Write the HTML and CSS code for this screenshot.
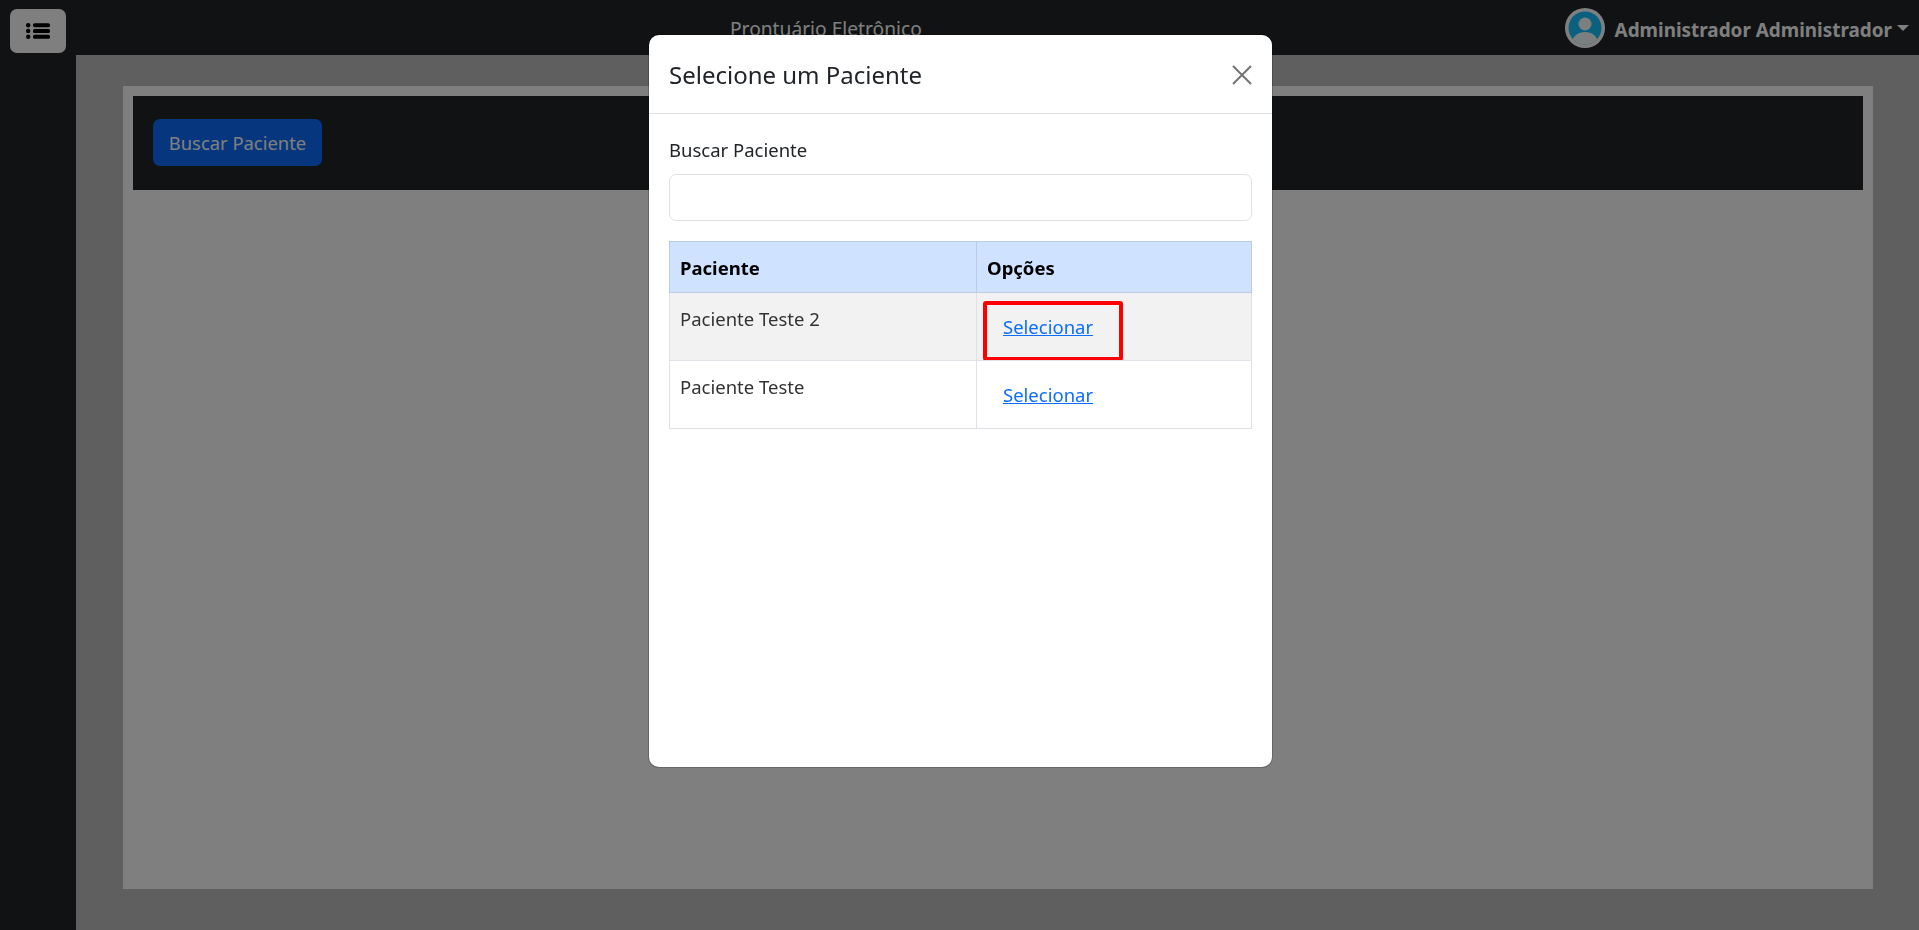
FILE: index.html
```html
<!DOCTYPE html>
<html lang="pt-BR">
<head>
  <meta charset="UTF-8">
  <title>Prontuário Eletrônico</title>
  <link rel="stylesheet" href="styles.css">
</head>
<body>
  <header class="topbar">
    <button class="menu-btn" type="button" aria-label="Menu">
      <svg width="24" height="16" viewBox="0 0 24 16">
        <circle cx="2.2" cy="2.2" r="2.2"/>
        <circle cx="2.2" cy="8" r="2.2"/>
        <circle cx="2.2" cy="13.8" r="2.2"/>
        <rect x="7" y="0.2" width="17" height="4" rx="1.6"/>
        <rect x="7" y="6" width="17" height="4" rx="1.6"/>
        <rect x="7" y="11.8" width="17" height="4" rx="1.6"/>
      </svg>
    </button>
    <div class="brand">Prontuário Eletrônico</div>
    <div class="user">
      <svg class="avatar" width="40" height="40" viewBox="0 0 40 40">
        <defs><clipPath id="inner"><circle cx="20" cy="20" r="16.5"/></clipPath></defs>
        <circle cx="20" cy="20" r="20" fill="#ffffff"/>
        <circle cx="20" cy="20" r="16.5" fill="#14c0fc"/>
        <g clip-path="url(#inner)" fill="#f6ffff">
          <circle cx="20" cy="16" r="6.5"/>
          <ellipse cx="20" cy="35" rx="13" ry="11"/>
        </g>
      </svg>
      <span class="user-name">Administrador Administrador</span>
      <span class="caret"></span>
    </div>
  </header>

  <div class="layout">
    <aside class="sidebar"></aside>
    <main class="content">
      <section class="card">
        <div class="card-bar">
          <button class="btn-search" type="button">Buscar Paciente</button>
        </div>
      </section>
    </main>
  </div>

  <div class="backdrop"></div>

  <div class="modal-wrap">
    <div class="modal">
      <div class="modal-header">
        <h5>Selecione um Paciente</h5>
        <svg class="close" width="20" height="20" viewBox="0 0 20 20">
          <path d="M1 1 L19 19 M19 1 L1 19"/>
        </svg>
      </div>
      <div class="modal-body">
        <label for="busca">Buscar Paciente</label>
        <input type="text" id="busca">
        <table>
          <thead>
            <tr><th class="col-name">Paciente</th><th>Opções</th></tr>
          </thead>
          <tbody>
            <tr class="striped">
              <td>Paciente Teste 2</td>
              <td class="cell-link"><a href="#" class="pick marked">Selecionar</a></td>
            </tr>
            <tr>
              <td>Paciente Teste</td>
              <td class="cell-link"><a href="#" class="pick">Selecionar</a></td>
            </tr>
          </tbody>
        </table>
      </div>
    </div>
  </div>
</body>
</html>
```

FILE: styles.css
```css
* {
  box-sizing: border-box;
}
html, body {
  height: 100%;
}
body {
  margin: 0;
  font-family: "Noto Sans", "Open Sans", sans-serif;
  font-size: 18.5px;
  color: #212529;
  background-color: #bebebe;
  overflow: hidden;
}
.topbar {
  display: flex;
  align-items: center;
  height: 55px;
  padding: 0 10px;
  background-color: #212529;
}
.menu-btn {
  display: flex;
  align-items: center;
  justify-content: center;
  width: 56px;
  height: 44px;
  margin-top: 7px;
  padding: 0;
  border: none;
  border-radius: 7px;
  background-color: #fff;
}
.brand {
  margin: 2px 0 0 664px;
  color: #fff;
  font-size: 19.2px;
}
.user {
  display: flex;
  align-items: center;
  margin-left: auto;
}
.avatar {
  margin-right: 10px;
}
.user-name {
  margin-top: 4px;
  color: #fff;
  font-weight: 700;
  font-size: 18.9px;
}
.caret {
  width: 0;
  height: 0;
  margin-left: 5px;
  border-top: 6px solid #fff;
  border-left: 6px solid transparent;
  border-right: 6px solid transparent;
}
.layout {
  display: flex;
  height: 875px;
}
.sidebar {
  width: 76px;
  background-color: #212529;
}
.content {
  flex: 1;
  padding: 31px 46px 41px 47px;
  background-color: #bebebe;
}
.card {
  height: 100%;
  padding: 10px;
  background-color: #fff;
}
.card-bar {
  height: 94px;
  padding: 23px 20px;
  background-color: #212529;
}
.btn-search {
  width: 169px;
  height: 47px;
  padding: 0;
  border: none;
  border-radius: 7px;
  background-color: #0d6efd;
  color: #fff;
  font-family: inherit;
  font-size: 18.4px;
}
.backdrop {
  position: fixed;
  top: 0;
  left: 0;
  width: 100%;
  height: 100%;
  background-color: rgba(0, 0, 0, 0.5);
}
.modal-wrap {
  position: fixed;
  top: 35px;
  left: 0;
  width: 100%;
  padding-left: 649px;
}
.modal {
  width: 623px;
  height: 732px;
  border-radius: 10px;
  background-color: #fff;
  box-shadow: 0 0 0 1px rgba(0, 0, 0, 0.2);
}
.modal-header {
  display: flex;
  align-items: center;
  justify-content: space-between;
  height: 79px;
  padding: 1px 20px 0;
  border-bottom: 1px solid #dee2e6;
}
.modal-header h5 {
  margin: 0;
  font-size: 24px;
  font-weight: 400;
}
.close path {
  fill: none;
  stroke: #737373;
  stroke-width: 2;
}
.modal-body {
  padding: 23px 20px;
}
.modal-body label {
  display: block;
  height: 37px;
  line-height: 26px;
}
.modal-body input {
  display: block;
  width: 100%;
  height: 47px;
  border: 1px solid #dee2e6;
  border-radius: 7px;
}
table {
  width: 583px;
  margin-top: 20px;
  border-collapse: collapse;
  table-layout: fixed;
}
th, td {
  padding: 13px 10px 0;
  border: 1px solid #dee2e6;
  text-align: left;
  vertical-align: top;
  line-height: 26px;
}
th {
  height: 51px;
  background-color: #cfe2ff;
  border-color: #bacbe6;
  color: #000;
}
.col-name {
  width: 307px;
}
td {
  height: 67px;
  color: #333;
}
.striped td {
  background-color: #f2f2f2;
}
.cell-link {
  padding: 8px 0 0 6px;
}
.pick {
  display: block;
  width: 140px;
  height: 60px;
  margin-bottom: -1px;
  padding: 9px 16px;
  border: 4px solid transparent;
  color: #0d6efd;
}
.pick.marked {
  border-color: #ff0000;
  border-radius: 3px;
}
```
